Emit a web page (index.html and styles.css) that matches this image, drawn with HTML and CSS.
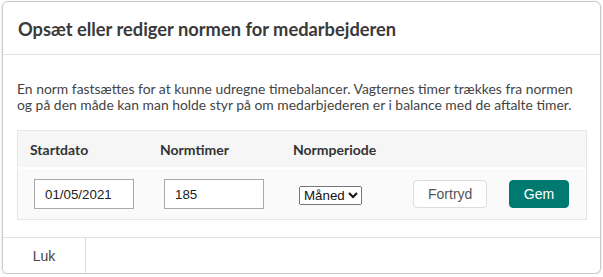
FILE: index.html
```html
<!DOCTYPE html>
<html lang="da">
<head>
    <meta charset="UTF-8">
    <meta name="viewport" content="width=device-width, initial-scale=1.0">
    <title>Norm</title>
    <link rel="stylesheet" href="styles.css">
</head>
<body>

<div class="modal">
    <div class="modal-header">
        <h2>Opsæt eller rediger normen for medarbejderen</h2>
    </div>
    <div class="modal-body">
        <p>En norm fastsættes for at kunne udregne timebalancer. Vagternes timer trækkes fra normen og på den måde kan man holde styr på om medarbjederen er i balance med de aftalte timer.</p>
        <div class="norm-table">
            <div class="norm-row norm-head">
                <div class="cell">Startdato</div>
                <div class="cell">Normtimer</div>
                <div class="cell">Normperiode</div>
                <div class="cell"></div>
                <div class="cell"></div>
            </div>
            <div class="norm-row norm-data">
                <div class="cell"><input type="text" value="01/05/2021"></div>
                <div class="cell"><input type="text" value="185"></div>
                <div class="cell cell-select">
                    <select>
                        <option>Måned</option>
                        <option>Uge</option>
                    </select>
                </div>
                <div class="cell"><button class="btn">Fortryd</button></div>
                <div class="cell"><button class="btn btn-primary">Gem</button></div>
            </div>
        </div>
    </div>
    <div class="modal-footer">
        <button class="btn-close">Luk</button>
    </div>
</div>

</body>
</html>
```

FILE: styles.css
```css
body {
    margin: 0;
    padding: 1px 0 0 2px;
    background: #fff;
    font-family: Lato, "Liberation Sans", sans-serif;
    color: #444;
}
.modal {
    width: 597px;
    height: 271px;
    background: #fff;
    border: 1px solid #c9c9c9;
    border-radius: 6px;
    box-shadow: 0 1px 3px rgba(0, 0, 0, 0.15);
    display: flex;
    flex-direction: column;
    overflow: hidden;
}
.modal-header {
    height: 52px;
    padding: 0 15px;
    display: flex;
    align-items: center;
    border-bottom: 1px solid #e3e3e3;
}
.modal-header h2 {
    margin: 2px 0 0;
    font-size: 18.3px;
    font-weight: bold;
    color: #3a3a3a;
}
.modal-body {
    flex: 1;
    padding: 26px 14px 0;
}
.modal-body p {
    margin: 0 0 17px;
    font-size: 13.9px;
    line-height: 16px;
}
.norm-table {
    width: 568px;
    border: 1px solid #e6e6e6;
}
.norm-row {
    display: grid;
    grid-template-columns: 130px 133px 116px 96px 1fr;
    align-items: center;
}
.norm-head {
    height: 36px;
    background: #f6f6f6;
    margin-bottom: 2px;
}
.norm-head .cell {
    padding-left: 12px;
    font-weight: bold;
    font-size: 14px;
    color: #333;
}
.norm-data {
    height: 50px;
    background: #fafafa;
}
.norm-data .cell {
    padding-left: 16px;
}
.norm-data .cell-select {
    padding-left: 18px;
}
.norm-data input {
    box-sizing: border-box;
    width: 100px;
    height: 30px;
    padding: 0 10px;
    border: 1px solid #a9a9a9;
    font-family: "Liberation Sans", Arial, sans-serif;
    font-size: 13.33px;
    color: #222;
}
.norm-data select {
    font-family: "Liberation Sans", Arial, sans-serif;
    font-size: 13.33px;
    color: #111;
}
.btn {
    height: 28px;
    padding: 0 14px;
    background: #fff;
    border: 1px solid #dcdcdc;
    border-radius: 4px;
    font-family: "Liberation Sans", Arial, sans-serif;
    font-size: 14px;
    color: #555;
}
.btn-primary {
    width: 60px;
    padding: 0;
    background: #007a70;
    border-color: #007a70;
    color: #fff;
}
.modal-footer {
    height: 35px;
    display: flex;
    border-top: 1px solid #e2e2e2;
}
.btn-close {
    width: 83px;
    background: #fff;
    border: none;
    border-right: 1px solid #dedede;
    font-family: "Liberation Sans", Arial, sans-serif;
    font-size: 14px;
    color: #444;
}
```
